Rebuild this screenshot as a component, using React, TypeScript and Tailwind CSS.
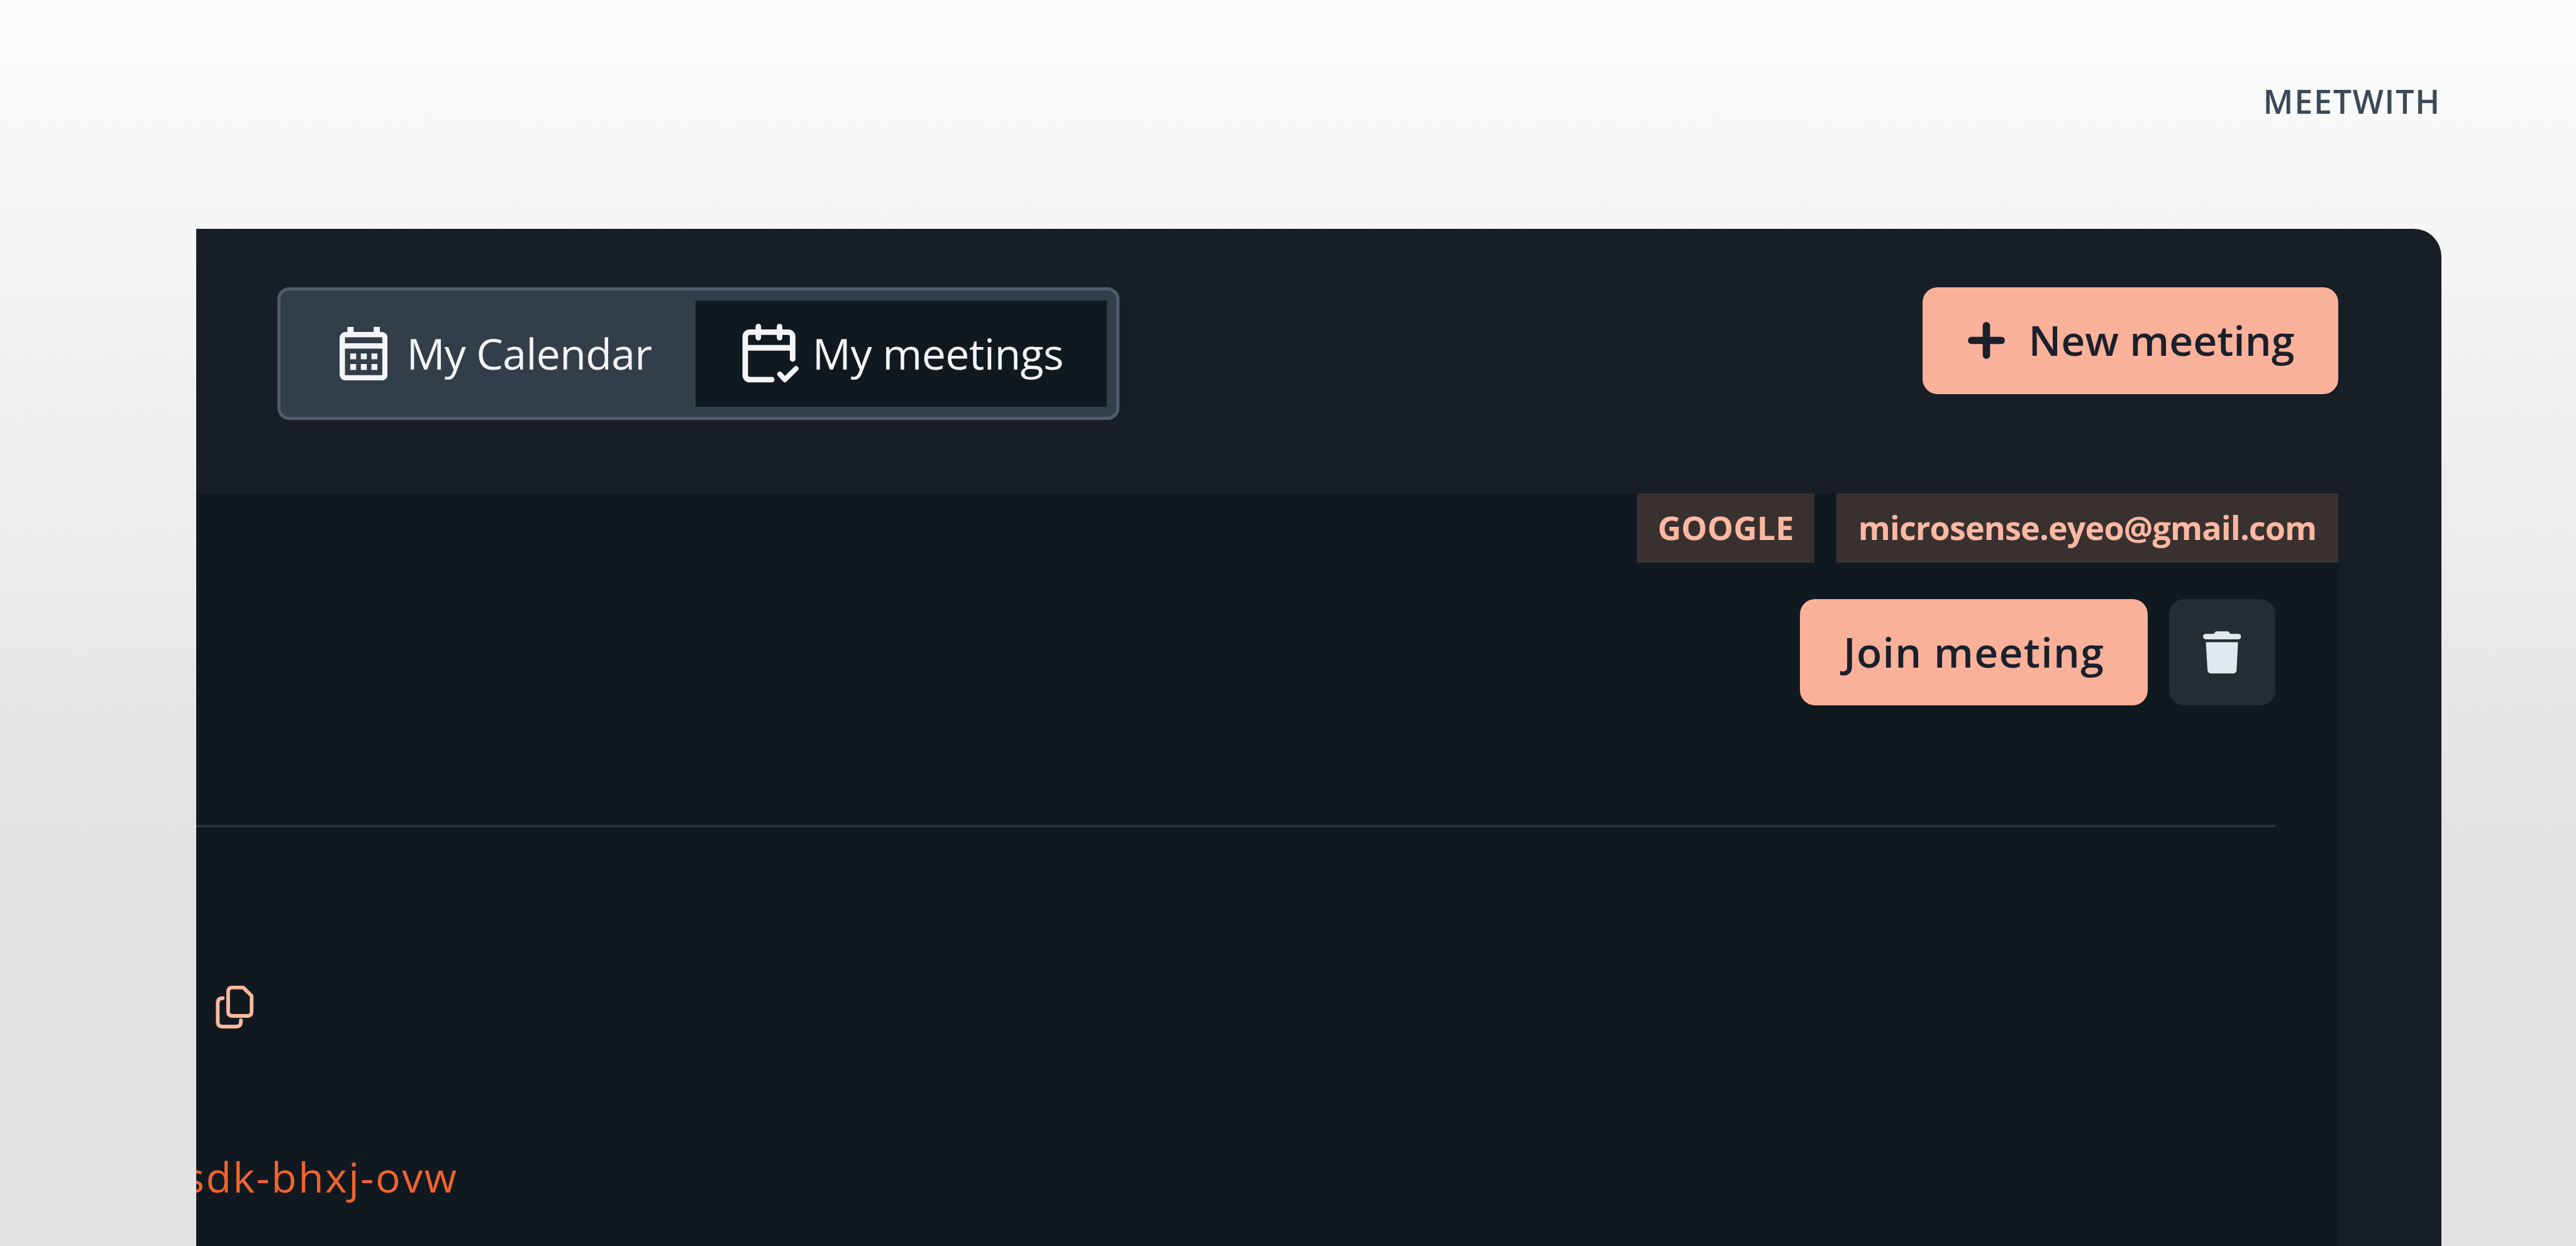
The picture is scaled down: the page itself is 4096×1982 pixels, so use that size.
import React from "react";

const CalendarIcon = () => (
  <svg className="shrink-0" width="76.4" height="85.3" viewBox="100 105 430 480" fill="none">
    <rect x="124" y="174" width="382" height="387" rx="30" stroke="#f3f4f6" strokeWidth="48" />
    <path d="M124 275H506" stroke="#f3f4f6" strokeWidth="48" />
    <path d="M170 105h55v50h-55zM405 105h55v50h-55z" fill="#f3f4f6" />
    <path
      d="M195 343h53v52h-53zM290 343h53v52h-53zM385 343h53v52h-53zM195 437h53v53h-53zM290 437h53v53h-53zM385 437h53v53h-53z"
      fill="#f3f4f6"
    />
  </svg>
);

const CalendarCheckIcon = () => (
  <svg className="shrink-0" width="89.8" height="94.2" viewBox="100 80 505 530" fill="none">
    <g stroke="#f3f4f6" strokeWidth="50" strokeLinecap="round" strokeLinejoin="round">
      <path d="M552 395V195a40 40 0 0 0-40-40H168a40 40 0 0 0-40 40V540a40 40 0 0 0 40 40H365" />
      <path d="M128 295H552" strokeLinecap="butt" />
      <path d="M245 105V205M435 105V205" />
      <path d="M437 530L482 580L582 482" strokeWidth="46" />
    </g>
  </svg>
);

const PlusIcon = () => (
  <svg className="shrink-0" width="59" height="59" viewBox="0 0 59 59" fill="none">
    <path d="M6 29.5H53M29.5 6V53" stroke="#1a202c" strokeWidth="11.7" strokeLinecap="round" />
  </svg>
);

const TrashIcon = () => (
  <svg width="61.3" height="71.1" viewBox="565 360 345 400" fill="#e2e8f0">
    <path d="M590 395H660L680 372H790L810 395H880a25 25 0 0 1 0 50H590a25 25 0 0 1 0-50Z" />
    <path d="M590 470H878L865 725Q860 750 835 750H640Q610 750 605 725Z" />
  </svg>
);

const CopyIcon = () => (
  <svg className="shrink-0" width="60.3" height="67.7" viewBox="0 0 113 127" fill="none">
    <g stroke="#fdb8a0" strokeWidth="11" strokeLinecap="round" strokeLinejoin="round">
      <path d="M49 5.5H82L107 30V78Q107 90 95 90H49Q37 90 37 78V18Q37 5.5 49 5.5Z" />
      <path d="M21 37Q6 37 6 52V108Q6 122 20 122H60Q75 122 75 108V103" />
    </g>
  </svg>
);

export default function App() {
  return (
    <div className="flex h-[1982px] w-full flex-col overflow-hidden bg-linear-to-b from-[#fcfcfc] to-[#e2e2e2] to-70% font-['Open_Sans',sans-serif]">
      <header className="flex h-[364.4px] shrink-0 justify-end pr-[215px] pt-[131px]">
        <span className="text-[52px] font-semibold leading-[60px] tracking-[1.7px] text-[#3b4a59]">MEETWITH</span>
      </header>

      <main className="ml-[311.5px] flex w-[3570.5px] flex-1 flex-col overflow-hidden rounded-tr-[44px] bg-[#171e25]">
        <div className="flex h-[420.6px] shrink-0 items-start justify-between pl-[129.5px] pr-[164px] pt-[92.6px]">
          <div className="flex h-[211px] w-[1339px] rounded-[19px] border-[5px] border-[#4f5b68] bg-[#323e4a] py-[16px] pl-[16px] pr-[15px]">
            <div className="flex h-[169px] flex-1 items-center pl-[78px] text-[68px] leading-none tracking-[-0.7px] text-[#f3f4f6]">
              <CalendarIcon />
              <span className="ml-[30px]">My Calendar</span>
            </div>
            <div className="flex h-[169px] w-[654.4px] items-center bg-[#111920] pl-[74.4px] text-[68px] leading-none tracking-[-0.5px] text-[#f3f4f6]">
              <CalendarCheckIcon />
              <span className="ml-[22px]">My meetings</span>
            </div>
          </div>

          <button className="flex h-[170px] w-[661px] items-center rounded-[24px] bg-[#fab19a] pl-[71.5px] text-[66px] font-semibold leading-none text-[#1a202c]">
            <PlusIcon />
            <span className="-mt-[4px] ml-[38px]">New meeting</span>
          </button>
        </div>

        <section className="mr-[164px] flex flex-1 flex-col bg-[#111920]">
          <div className="flex h-[110.5px] shrink-0 justify-end gap-[35px] text-[52px] font-bold leading-none text-[#fdb8a2]">
            <span className="flex w-[282px] items-center justify-center bg-[#393130] pb-[3px]">GOOGLE</span>
            <span className="flex w-[798px] items-center justify-center bg-[#393130] pb-[3px] tracking-[-0.85px]">
              microsense.eyeo@gmail.com
            </span>
          </div>

          <div className="mt-[58px] flex h-[169px] shrink-0 justify-end gap-[34px] pr-[100px]">
            <button className="flex w-[553px] items-center justify-center rounded-[24px] bg-[#fab19a] pb-[4px] text-[66px] font-semibold leading-none tracking-[1.3px] text-[#1a202c]">
              Join meeting
            </button>
            <button className="flex w-[169px] items-center justify-center rounded-[24px] bg-[#262c34]">
              <TrashIcon />
            </button>
          </div>

          <div className="mr-[100px] mt-[190px] h-[4px] shrink-0 bg-[#2b3038]" />

          <div className="ml-[31px] mt-[252px]">
            <CopyIcon />
          </div>

          <div className="-ml-[18px] mt-[195px] whitespace-nowrap text-[66px] leading-[80px] tracking-[2.5px] text-[#f0632f]">
            sdk-bhxj-ovw
          </div>
        </section>
      </main>
    </div>
  );
}
